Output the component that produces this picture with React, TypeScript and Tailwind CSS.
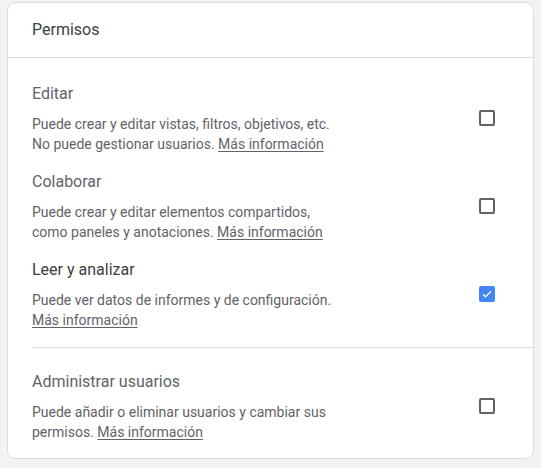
import React from 'react';

interface Permission {
  title: string;
  lines: React.ReactNode[];
  checked: boolean;
}

const Link = () => (
  <span className="underline underline-offset-2 decoration-[#5f6368]">Más información</span>
);

const permissions: Permission[] = [
  {
    title: 'Editar',
    lines: [
      'Puede crear y editar vistas, filtros, objetivos, etc.',
      <>No puede gestionar usuarios. <Link /></>,
    ],
    checked: false,
  },
  {
    title: 'Colaborar',
    lines: [
      'Puede crear y editar elementos compartidos,',
      <>como paneles y anotaciones. <Link /></>,
    ],
    checked: false,
  },
  {
    title: 'Leer y analizar',
    lines: ['Puede ver datos de informes y de configuración.', <Link />],
    checked: true,
  },
];

const Checkbox: React.FC<{ checked: boolean }> = ({ checked }) =>
  checked ? (
    <div className="w-4 h-4 rounded-[2px] bg-[#4285f4] flex items-center justify-center">
      <svg width="12" height="12" viewBox="0 0 24 24" fill="none">
        <path d="M4 12.5l5 5L20 6.5" stroke="white" strokeWidth="2.6" />
      </svg>
    </div>
  ) : (
    <div className="w-4 h-4 rounded-[2px] border-2 border-[#5f6368]" />
  );

const Row: React.FC<{ p: Permission }> = ({ p }) => (
  <div className="flex items-center">
    <div className="flex-1">
      <div
        className={
          'text-[16px] leading-6 ' + (p.checked ? 'text-[#3c4043]' : 'text-[#5f6368]')
        }
      >
        {p.title}
      </div>
      <div className="mt-2 text-[14px] leading-5 text-[#5f6368]">
        {p.lines.map((l, i) => (
          <div key={i} className="whitespace-nowrap">
            {l}
          </div>
        ))}
      </div>
    </div>
    <div className="shrink-0">
      <Checkbox checked={p.checked} />
    </div>
  </div>
);

export default function App() {
  return (
    <div
      className="w-[541px] h-[468px] bg-[#f1f3f4] pt-[2px] pl-[7px]"
      style={{ fontFamily: 'Roboto, "Noto Sans", sans-serif' }}
    >
      <div className="w-[527px] h-[457px] bg-white border border-[#dadce0] rounded-lg overflow-hidden">
        <div className="h-[55px] px-6 flex items-center border-b border-[#dadce0] text-[16px] text-[#3c4043]">
          Permisos
        </div>
        <div className="pt-6 pl-6 pr-[38px] flex flex-col gap-4">
          {permissions.map((p) => (
            <Row key={p.title} p={p} />
          ))}
        </div>
        <div className="ml-6 mt-[17px] border-t border-[#dadce0]" />
        <div className="pt-[22px] pl-6 pr-[38px]">
          <Row
            p={{
              title: 'Administrar usuarios',
              lines: [
                'Puede añadir o eliminar usuarios y cambiar sus',
                <>permisos. <Link /></>,
              ],
              checked: false,
            }}
          />
        </div>
      </div>
    </div>
  );
}
